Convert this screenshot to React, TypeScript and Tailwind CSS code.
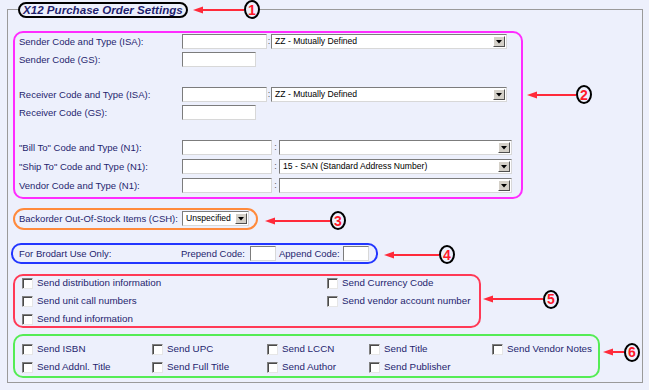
import React from "react";

const TXT = "text-[#1f1f6e]";

function Field({ w }: { w: string }) {
  return (
    <span
      className={`block h-[15px] bg-white border border-t-[#7c7c7c] border-l-[#7c7c7c] border-b-[#d8d8d8] border-r-[#d8d8d8] ${w}`}
    />
  );
}

function Drop({ w, text }: { w: string; text?: string }) {
  return (
    <span
      className={`flex items-center h-[15px] bg-white border border-t-[#7c7c7c] border-l-[#7c7c7c] border-b-[#d8d8d8] border-r-[#d8d8d8] ${w}`}
    >
      <span className="flex-1 pl-[3px] text-[8.6px] leading-none text-black whitespace-nowrap overflow-hidden">
        {text}
      </span>
      <span className="flex items-center justify-center w-[12px] h-[11px] mr-[1px] bg-[#d4d0c8] border border-t-white border-l-white border-b-[#505050] border-r-[#505050]">
        <svg width="6" height="4" viewBox="0 0 6 4">
          <polygon points="0,0 6,0 3,3.5" fill="#000" />
        </svg>
      </span>
    </span>
  );
}

function Colon({ w }: { w: string }) {
  return (
    <span className={`text-center text-[9px] leading-none text-[#555] ${w}`}>:</span>
  );
}

function Check({ label }: { label: string }) {
  return (
    <span className="flex items-center h-[14px]">
      <span className="block w-[11px] h-[11px] mr-[4px] bg-white border border-t-[#808080] border-l-[#808080] border-b-[#e6e6e6] border-r-[#e6e6e6] shadow-[inset_1px_1px_0_#4a4a4a]" />
      <span className={`text-[9.8px] leading-none whitespace-nowrap ${TXT}`}>{label}</span>
    </span>
  );
}

function Note({ len, n, cls = "" }: { len: number; n: string; cls?: string }) {
  return (
    <span className={`flex items-center shrink-0 ${cls}`}>
      <svg width={len} height="10" viewBox={`0 0 ${len} 10`}>
        <line x1="6" y1="5" x2={len} y2="5" stroke="#ff2a3a" strokeWidth="2" />
        <polygon points="0,5 10,1.5 10,8.5" fill="#ff2a3a" />
      </svg>
      <span className="flex items-center justify-center w-[16px] h-[19px] border-2 border-black rounded-[50%] text-[14px] leading-none font-bold text-[#ff1a2a] bg-[#edf0fc]">
        {n}
      </span>
    </span>
  );
}

function Row({
  label,
  children,
  cls = "",
}: {
  label: string;
  children: React.ReactNode;
  cls?: string;
}) {
  return (
    <div className={`flex items-center h-[15px] ${cls}`}>
      <span className={`w-[163px] text-[9.5px] leading-none whitespace-nowrap ${TXT}`}>{label}</span>
      {children}
    </div>
  );
}

export default function App() {
  return (
    <div className="w-[649px] h-[390px] bg-[#edf0fc] font-['Liberation_Sans',Arial,sans-serif] pl-[7px] overflow-hidden">
      <fieldset className="w-[636px] border border-[#9a9a9a] pl-[5px] pt-[12px] pb-[4px] pr-0 m-0">
        <legend className="ml-[5px] p-0 flex items-center h-[19px]">
          <span className="flex items-center h-[16px] px-[3px] border-2 border-black rounded-full">
            <span className={`text-[11.6px] leading-none font-bold italic ${TXT}`}>
              X12 Purchase Order Settings
            </span>
          </span>
          <Note len={51} n="1" cls="ml-[5px]" />
        </legend>

        {/* Section 2 */}
        <div className="flex items-start">
          <div className="w-[510px] border-2 border-[#ff2cff] rounded-[10px] pl-[4px] pt-[1px] pb-[4px]">
            <Row label="Sender Code and Type (ISA):">
              <Field w="w-[85px]" />
              <Colon w="w-[4px]" />
              <Drop w="w-[236px]" text="ZZ - Mutually Defined" />
            </Row>
            <Row label="Sender Code (GS):" cls="mt-[3px]">
              <Field w="w-[74px]" />
            </Row>
            <Row label="Receiver Code and Type (ISA):" cls="mt-[20px]">
              <Field w="w-[85px]" />
              <Colon w="w-[4px]" />
              <Drop w="w-[236px]" text="ZZ - Mutually Defined" />
            </Row>
            <Row label="Receiver Code (GS):" cls="mt-[3px]">
              <Field w="w-[74px]" />
            </Row>
            <Row label={'"Bill To" Code and Type (N1):'} cls="mt-[20px]">
              <Field w="w-[90px]" />
              <Colon w="w-[7px]" />
              <Drop w="w-[233px]" />
            </Row>
            <Row label={'"Ship To" Code and Type (N1):'} cls="mt-[4px]">
              <Field w="w-[90px]" />
              <Colon w="w-[7px]" />
              <Drop w="w-[233px]" text="15 - SAN (Standard Address Number)" />
            </Row>
            <Row label="Vendor Code and Type (N1):" cls="mt-[4px]">
              <Field w="w-[90px]" />
              <Colon w="w-[7px]" />
              <Drop w="w-[233px]" />
            </Row>
          </div>
          <Note len={49} n="2" cls="ml-[4px] mt-[54px]" />
        </div>

        {/* Section 3 */}
        <div className="flex items-center mt-[8px]">
          <div className="w-[245px] h-[22px] border-2 border-[#ff8a3c] rounded-[11px] pl-[4px] flex items-center">
            <span className={`w-[163px] text-[9.5px] leading-none whitespace-nowrap ${TXT}`}>
              Backorder Out-Of-Stock Items (CSH):
            </span>
            <Drop w="w-[67px]" text="Unspecified" />
          </div>
          <Note len={65} n="3" cls="ml-[7px] mt-[4px]" />
        </div>

        {/* Section 4 */}
        <div className="flex items-center mt-[13px] -ml-[2px]">
          <div className="w-[367px] h-[21px] border-2 border-[#2236ff] rounded-[10px] pl-[6px] flex items-center">
            <span className={`w-[162px] text-[9.5px] leading-none whitespace-nowrap ${TXT}`}>
              For Brodart Use Only:
            </span>
            <span className={`w-[69px] text-[9.5px] leading-none whitespace-nowrap ${TXT}`}>
              Prepend Code:
            </span>
            <Field w="w-[26px]" />
            <span className={`w-[64px] ml-[3px] text-[9.5px] leading-none whitespace-nowrap ${TXT}`}>
              Append Code:
            </span>
            <Field w="w-[26px]" />
          </div>
          <Note len={55} n="4" cls="ml-[6px] mt-[2px]" />
        </div>

        {/* Section 5 */}
        <div className="flex items-center mt-[10px]">
          <div className="w-[468px] h-[54px] border-2 border-[#ff3a56] rounded-[10px] pl-[7px] grid grid-cols-[305px_auto] gap-y-[4px] content-start">
            <Check label="Send distribution information" />
            <Check label="Send Currency Code" />
            <Check label="Send unit call numbers" />
            <Check label="Send vendor account number" />
            <Check label="Send fund information" />
          </div>
          <Note len={60} n="5" cls="ml-[2px] mb-[4px]" />
        </div>

        {/* Section 6 */}
        <div className="flex items-center mt-[6px]">
          <div className="w-[587px] h-[44px] border-2 border-[#55ec55] rounded-[10px] pl-[7px] pt-[6px] grid grid-cols-[130px_115px_102px_123px_auto] gap-y-[4px] content-start">
            <Check label="Send ISBN" />
            <Check label="Send UPC" />
            <Check label="Send LCCN" />
            <Check label="Send Title" />
            <Check label="Send Vendor Notes" />
            <Check label="Send Addnl. Title" />
            <Check label="Send Full Title" />
            <Check label="Send Author" />
            <Check label="Send Publisher" />
          </div>
          <Note len={21} n="6" cls="ml-[3px] mb-[8px]" />
        </div>
      </fieldset>
    </div>
  );
}
